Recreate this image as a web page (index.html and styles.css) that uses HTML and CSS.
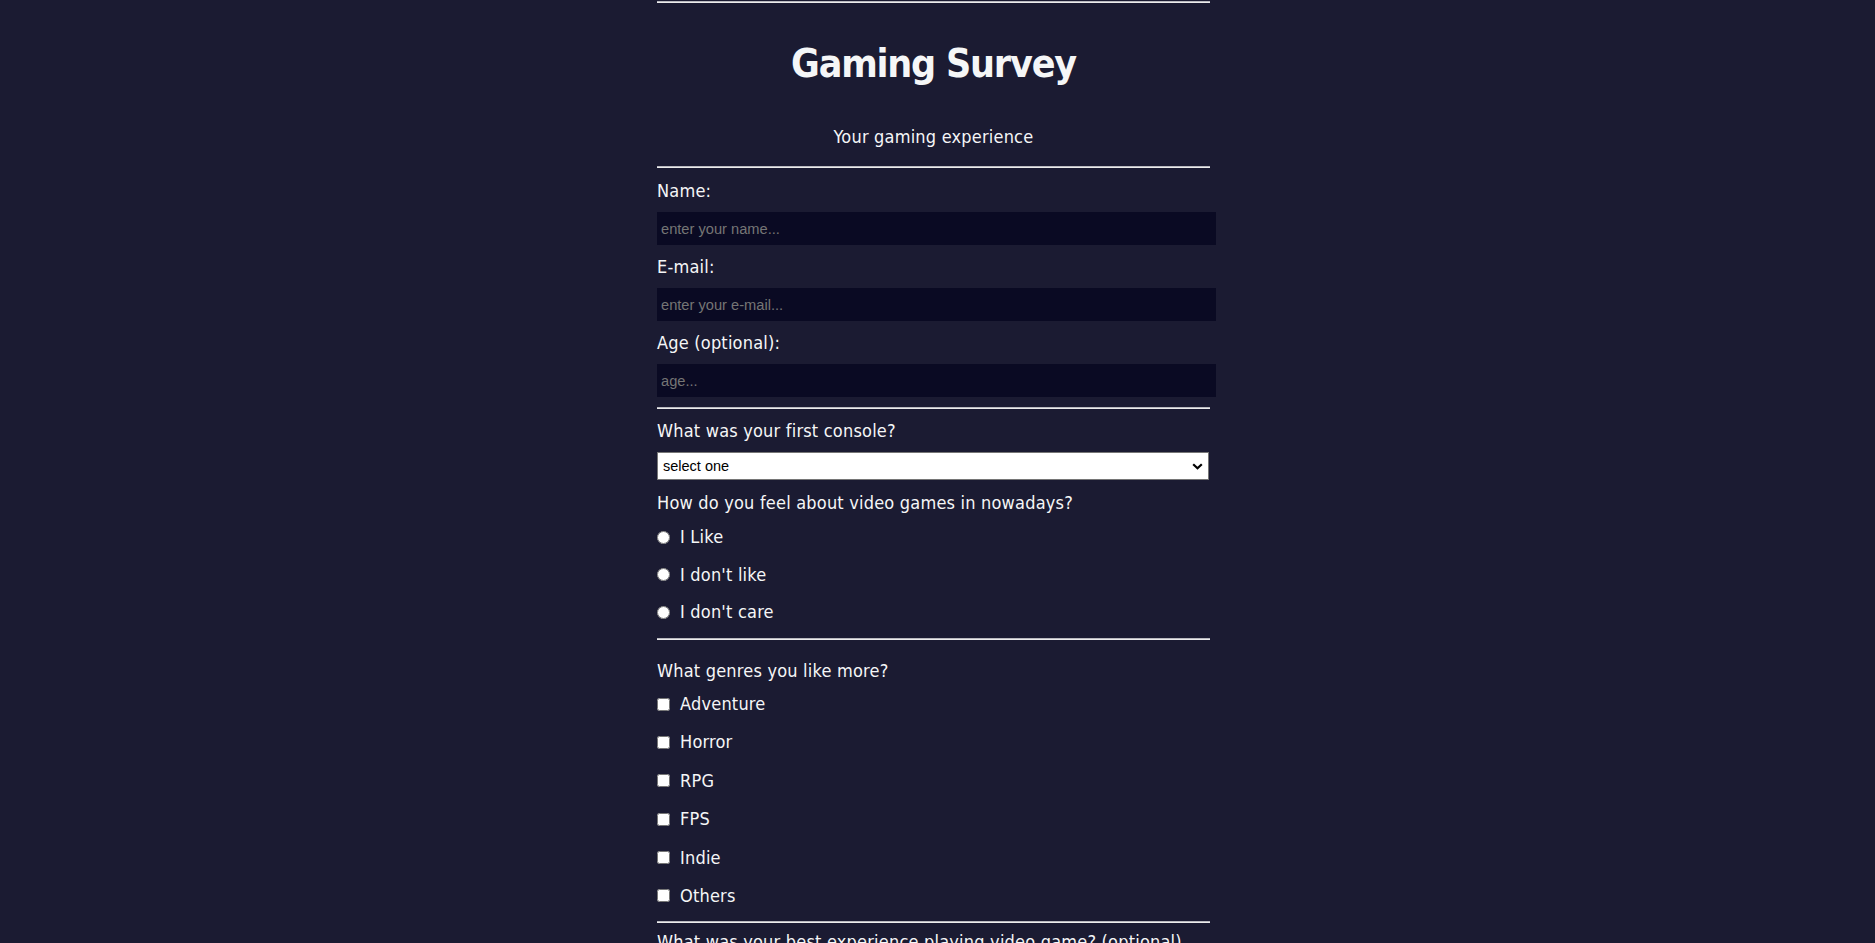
FILE: index.html
```html
<!DOCTYPE html>
<html lang="en">
<head>
<meta charset="utf-8">
<title>Gaming Survey</title>
<link rel="stylesheet" href="styles.css">
</head>
<body>
<main class="page">
  <hr class="rule rule-top">
  <header class="head">
    <h1 class="title" id="title">Gaming Survey</h1>
    <p class="subtitle" id="description">Your gaming experience</p>
  </header>
  <hr class="rule rule-head">
  <form class="survey" id="survey-form">
    <section class="block block-info">
      <label class="label" for="name" id="name-label">Name:</label>
      <input class="text-input" id="name" type="text" placeholder="enter your name...">
      <label class="label label-next" for="email" id="email-label">E-mail:</label>
      <input class="text-input" id="email" type="email" placeholder="enter your e-mail...">
      <label class="label label-next" for="number" id="number-label">Age (optional):</label>
      <input class="text-input" id="number" type="number" placeholder="age...">
    </section>
    <hr class="rule rule-info">
    <section class="block block-console">
      <label class="label" for="dropdown">What was your first console?</label>
      <div class="select-wrap">
        <select class="select" id="dropdown">
          <option>select one</option>
          <option>Atari</option>
          <option>NES</option>
          <option>Master System</option>
          <option>SNES</option>
          <option>Mega Drive</option>
          <option>PlayStation</option>
          <option>Other</option>
        </select>
        <svg class="chevron" width="11" height="7" viewBox="0 0 11 7" aria-hidden="true"><polyline points="1.2,1.2 5.5,5.3 9.8,1.2" fill="none" stroke="#000" stroke-width="2.2"/></svg>
      </div>
      <p class="label label-question">How do you feel about video games in nowadays?</p>
      <div class="choices choices-radio">
        <label class="choice"><input class="radio" type="radio" name="feel" value="like"><span>I Like</span></label>
        <label class="choice"><input class="radio" type="radio" name="feel" value="dislike"><span>I don't like</span></label>
        <label class="choice"><input class="radio" type="radio" name="feel" value="dontcare"><span>I don't care</span></label>
      </div>
    </section>
    <hr class="rule rule-console">
    <section class="block block-genres">
      <p class="label">What genres you like more?</p>
      <div class="choices choices-check">
        <label class="choice"><input class="check" type="checkbox" value="adventure"><span>Adventure</span></label>
        <label class="choice"><input class="check" type="checkbox" value="horror"><span>Horror</span></label>
        <label class="choice"><input class="check" type="checkbox" value="rpg"><span>RPG</span></label>
        <label class="choice"><input class="check" type="checkbox" value="fps"><span>FPS</span></label>
        <label class="choice"><input class="check" type="checkbox" value="indie"><span>Indie</span></label>
        <label class="choice"><input class="check" type="checkbox" value="others"><span>Others</span></label>
      </div>
    </section>
    <hr class="rule rule-genres">
    <section class="block block-story">
      <label class="label" for="story">What was your best experience playing video game? (optional)</label>
      <textarea class="textarea" id="story" placeholder="tell us..."></textarea>
      <button class="submit" id="submit" type="submit">Submit</button>
    </section>
  </form>
</main>
</body>
</html>
```

FILE: styles.css
```css
html, body {
  margin: 0;
  background: #1b1b32;
}

body {
  padding-right: 8px;
  color: #f5f6f7;
  font-family: "DejaVu Sans Condensed", "DejaVu Sans", Tahoma, sans-serif;
  font-size: 18px;
  line-height: 22px;
  letter-spacing: 0.2px;
}

.page {
  width: 553px;
  margin: 0 auto;
}

.rule {
  display: block;
  height: 0;
  margin: 0;
  border: 0;
  border-top: 1px solid #b9b9bf;
  border-bottom: 1px solid #ececec;
}

.rule-top { margin-top: 1px; }

.head { text-align: center; }

.title {
  margin: 37px 0 0;
  font-size: 39px;
  line-height: 48px;
  font-weight: bold;
  letter-spacing: -1.2px;
}

.subtitle {
  margin: 38px 0 0;
  font-size: 18px;
  line-height: 22px;
}

.rule-head { margin-top: 18px; }

.survey { margin: 0; }

.block { display: flex; flex-direction: column; align-items: flex-start; }

.block-info { padding: 12px 0 10px; }
.block-console { padding: 11px 0 15px; }
.block-genres { padding: 20px 0 14px; }
.block-story { padding: 8px 0 40px; }

.label {
  display: block;
  margin: 0;
  font-size: 18px;
  line-height: 22px;
}

.label-next { margin-top: 11px; }

.text-input {
  box-sizing: border-box;
  width: 559px;
  height: 33px;
  margin-top: 10px;
  padding: 0 4px;
  border: 0;
  background: #0a0a23;
  color: #f5f6f7;
  font-family: "Liberation Sans", Arial, sans-serif;
  font-size: 14.67px;
  letter-spacing: 0;
  outline: none;
}

.text-input::placeholder { color: #757575; }

.text-input::-webkit-outer-spin-button,
.text-input::-webkit-inner-spin-button { -webkit-appearance: none; margin: 0; }

.select-wrap {
  position: relative;
  margin-top: 10px;
  width: 552px;
}

.select {
  display: block;
  box-sizing: border-box;
  width: 552px;
  height: 28px;
  margin: 0;
  padding: 0 0 0 5px;
  border: 1px solid #767676;
  border-radius: 0;
  background: #ffffff;
  color: #000;
  font-family: "Liberation Sans", Arial, sans-serif;
  font-size: 14.5px;
  letter-spacing: 0;
  -webkit-appearance: none;
  appearance: none;
}

.chevron {
  position: absolute;
  right: 6px;
  top: 11px;
  pointer-events: none;
}

.label-question { margin-top: 12px; }

.choices { display: flex; flex-direction: column; }
.choices-radio { margin-top: 12px; gap: 15.5px; }
.choices-check { margin-top: 11px; gap: 16.4px; }

.choice {
  display: flex;
  align-items: center;
  height: 22px;
  font-size: 18px;
  line-height: 22px;
}

.radio, .check {
  width: 13px;
  height: 13px;
  margin: 0 10px 0 0;
  flex: none;
}

.textarea {
  box-sizing: border-box;
  width: 559px;
  height: 90px;
  margin-top: 10px;
  padding: 4px;
  border: 0;
  background: #0a0a23;
  color: #f5f6f7;
  font-family: "Liberation Sans", Arial, sans-serif;
  font-size: 14.67px;
}

.submit {
  margin-top: 16px;
  width: 559px;
  height: 36px;
  border: 0;
  background: #3b3b4f;
  color: #f5f6f7;
  font-family: inherit;
  font-size: 18px;
}
```
